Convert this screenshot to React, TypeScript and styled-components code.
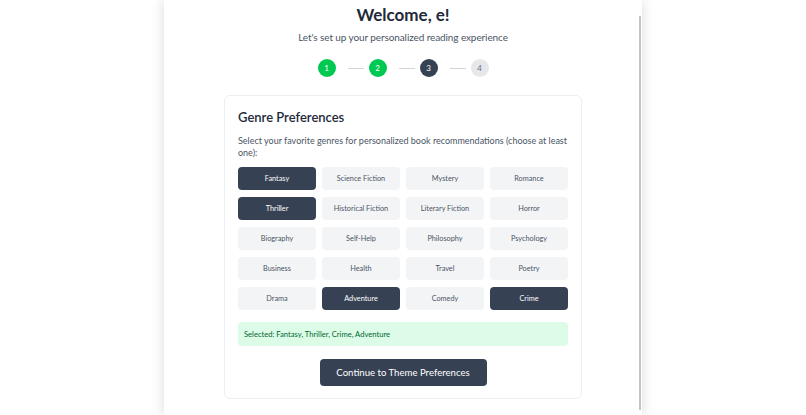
import React, { useState } from 'react';
import styled, { createGlobalStyle } from 'styled-components';

const GENRES = [
  'Fantasy',
  'Science Fiction',
  'Mystery',
  'Romance',
  'Thriller',
  'Historical Fiction',
  'Literary Fiction',
  'Horror',
  'Biography',
  'Self-Help',
  'Philosophy',
  'Psychology',
  'Business',
  'Health',
  'Travel',
  'Poetry',
  'Drama',
  'Adventure',
  'Comedy',
  'Crime',
];

type StepState = 'done' | 'current' | 'todo';

const STEPS: StepState[] = ['done', 'done', 'current', 'todo'];

const App: React.FC = () => {
  const [selected, setSelected] = useState<string[]>([
    'Fantasy',
    'Thriller',
    'Crime',
    'Adventure',
  ]);

  const toggle = (genre: string) => {
    setSelected((prev) =>
      prev.includes(genre) ? prev.filter((g) => g !== genre) : [...prev, genre]
    );
  };

  return (
    <>
      <GlobalStyle />
      <Panel>
        <Content>
          <Title>Welcome, e!</Title>
          <Subtitle>Let's set up your personalized reading experience</Subtitle>

          <Steps>
            {STEPS.map((state, i) => (
              <React.Fragment key={i}>
                {i > 0 && <StepLine />}
                <StepDot $state={state}>{i + 1}</StepDot>
              </React.Fragment>
            ))}
          </Steps>

          <Card>
            <CardTitle>Genre Preferences</CardTitle>
            <CardText>
              Select your favorite genres for personalized book recommendations
              (choose at least one):
            </CardText>

            <GenreGrid>
              {GENRES.map((genre) => (
                <GenreButton
                  key={genre}
                  $active={selected.includes(genre)}
                  onClick={() => toggle(genre)}
                >
                  {genre}
                </GenreButton>
              ))}
            </GenreGrid>

            {selected.length > 0 && (
              <SelectedBox>Selected: {selected.join(', ')}</SelectedBox>
            )}

            <Actions>
              <ContinueButton disabled={selected.length === 0}>
                Continue to Theme Preferences
              </ContinueButton>
            </Actions>
          </Card>
        </Content>

        <ScrollTrack>
          <ScrollThumb />
        </ScrollTrack>
      </Panel>
    </>
  );
};

const GlobalStyle = createGlobalStyle`
  html, body {
    margin: 0;
    padding: 0;
    background: #ffffff;
    overflow: hidden;
  }

  body {
    font-family: Lato, 'Open Sans', sans-serif;
    -webkit-font-smoothing: antialiased;
  }
`;

const Panel = styled.div`
  width: 478px;
  height: 415px;
  margin: 0 auto;
  background: #ffffff;
  box-shadow: 0 0 12px rgba(0, 0, 0, 0.15);
  display: flex;
  overflow: hidden;
`;

const Content = styled.div`
  flex: 1;
  padding: 4px 0 0 3px;
  display: flex;
  flex-direction: column;
  align-items: center;
`;

const Title = styled.h1`
  margin: 0;
  font-size: 17px;
  line-height: 22px;
  font-weight: 700;
  color: #1e2939;
`;

const Subtitle = styled.p`
  margin: 4px 0 0;
  font-size: 10px;
  line-height: 14px;
  letter-spacing: -0.1px;
  color: #4a5565;
`;

const Steps = styled.div`
  display: flex;
  align-items: center;
  margin-top: 15px;
`;

const StepDot = styled.div<{ $state: StepState }>`
  width: 18px;
  height: 18px;
  border-radius: 50%;
  display: flex;
  align-items: center;
  justify-content: center;
  font-size: 8px;
  color: ${({ $state }) => ($state === 'todo' ? '#6a7282' : '#ffffff')};
  background: ${({ $state }) =>
    $state === 'done' ? '#00c951' : $state === 'current' ? '#364153' : '#e5e7eb'};
`;

const StepLine = styled.div`
  width: 16px;
  height: 1px;
  margin: 0 5px 0 12px;
  background: #d1d5dc;
`;

const Card = styled.div`
  width: 358px;
  box-sizing: border-box;
  margin-top: 18px;
  padding: 12px 13px 12px;
  border: 1px solid #eceef1;
  border-radius: 6px;
  background: #ffffff;
`;

const CardTitle = styled.h2`
  margin: 0;
  font-size: 13px;
  line-height: 18px;
  font-weight: 600;
  color: #1e2939;
`;

const CardText = styled.p`
  margin: 9px 0 0;
  font-size: 9px;
  line-height: 12px;
  color: #4a5565;
`;

const GenreGrid = styled.div`
  display: grid;
  grid-template-columns: repeat(4, 1fr);
  column-gap: 6px;
  row-gap: 7px;
  margin-top: 8px;
`;

const GenreButton = styled.button<{ $active: boolean }>`
  height: 23px;
  border: none;
  border-radius: 4px;
  padding: 0 4px;
  font-family: inherit;
  font-size: 7.3px;
  cursor: pointer;
  background: ${({ $active }) => ($active ? '#364153' : '#f3f4f6')};
  color: ${({ $active }) => ($active ? '#ffffff' : '#4a5565')};
`;

const SelectedBox = styled.div`
  margin-top: 12px;
  height: 24px;
  padding: 0 6px;
  display: flex;
  align-items: center;
  border-radius: 4px;
  background: #dcfce7;
  color: #016630;
  font-size: 7.6px;
`;

const Actions = styled.div`
  display: flex;
  justify-content: center;
  margin-top: 13px;
`;

const ContinueButton = styled.button`
  width: 167px;
  height: 27px;
  border: none;
  border-radius: 4px;
  background: #364153;
  color: #ffffff;
  font-family: inherit;
  font-size: 9.6px;
  cursor: pointer;
`;

const ScrollTrack = styled.div`
  width: 3px;
  flex-shrink: 0;
`;

const ScrollThumb = styled.div`
  width: 2px;
  height: 394px;
  margin-top: 16px;
  background: #c4c4c4;
`;

export default App;
